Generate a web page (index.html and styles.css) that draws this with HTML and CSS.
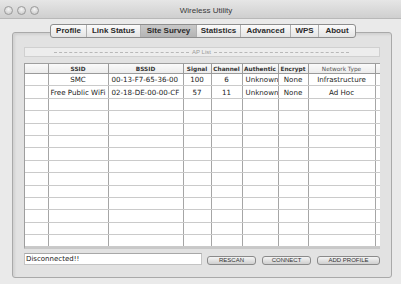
FILE: index.html
```html
<!DOCTYPE html>
<html lang="en">
<head>
    <meta charset="UTF-8">
    <title>Wireless Utility</title>
    <link rel="stylesheet" href="styles.css">
</head>
<body>

<div class="window">
    <div class="titlebar">
        <div class="lights">
            <span class="light"></span>
            <span class="light"></span>
            <span class="light"></span>
        </div>
        <div class="title">Wireless Utility</div>
    </div>

    <div class="content">
        <div class="tabs">
            <div class="tab w-profile">Profile</div>
            <div class="tab w-link">Link Status</div>
            <div class="tab w-survey active">Site Survey</div>
            <div class="tab w-stats">Statistics</div>
            <div class="tab w-adv">Advanced</div>
            <div class="tab w-wps">WPS</div>
            <div class="tab w-about">About</div>
        </div>

        <div class="panel">
            <div class="aplist">
                <span class="dash"></span>
                <span class="aplabel">AP List</span>
                <span class="dash"></span>
            </div>

            <div class="grid">
                <table>
                    <colgroup>
                        <col class="c0"><col class="c1"><col class="c2"><col class="c3"><col class="c4">
                        <col class="c5"><col class="c6"><col class="c7"><col class="c8">
                    </colgroup>
                    <thead>
                        <tr>
                            <th></th>
                            <th>SSID</th>
                            <th>BSSID</th>
                            <th>Signal</th>
                            <th>Channel</th>
                            <th>Authentic</th>
                            <th>Encrypt</th>
                            <th class="light-head">Network Type</th>
                            <th></th>
                        </tr>
                    </thead>
                    <tbody>
                        <tr>
                            <td></td><td>SMC</td><td class="left">00-13-F7-65-36-00</td><td>100</td><td>6</td>
                            <td class="left">Unknown</td><td>None</td><td>Infrastructure</td><td></td>
                        </tr>
                        <tr>
                            <td></td><td>Free Public WiFi</td><td class="left">02-18-DE-00-00-CF</td><td>57</td><td>11</td>
                            <td class="left">Unknown</td><td>None</td><td>Ad Hoc</td><td></td>
                        </tr>
                        <tr><td></td><td></td><td></td><td></td><td></td><td></td><td></td><td></td><td></td></tr>
                        <tr><td></td><td></td><td></td><td></td><td></td><td></td><td></td><td></td><td></td></tr>
                        <tr><td></td><td></td><td></td><td></td><td></td><td></td><td></td><td></td><td></td></tr>
                        <tr><td></td><td></td><td></td><td></td><td></td><td></td><td></td><td></td><td></td></tr>
                        <tr><td></td><td></td><td></td><td></td><td></td><td></td><td></td><td></td><td></td></tr>
                        <tr><td></td><td></td><td></td><td></td><td></td><td></td><td></td><td></td><td></td></tr>
                        <tr><td></td><td></td><td></td><td></td><td></td><td></td><td></td><td></td><td></td></tr>
                        <tr><td></td><td></td><td></td><td></td><td></td><td></td><td></td><td></td><td></td></tr>
                        <tr><td></td><td></td><td></td><td></td><td></td><td></td><td></td><td></td><td></td></tr>
                        <tr><td></td><td></td><td></td><td></td><td></td><td></td><td></td><td></td><td></td></tr>
                        <tr><td></td><td></td><td></td><td></td><td></td><td></td><td></td><td></td><td></td></tr>
                        <tr><td></td><td></td><td></td><td></td><td></td><td></td><td></td><td></td><td></td></tr>
                        <tr><td></td><td></td><td></td><td></td><td></td><td></td><td></td><td></td><td></td></tr>
                    </tbody>
                </table>
            </div>

            <div class="bottom">
                <div class="status">Disconnected!!</div>
                <button class="btn b-rescan">RESCAN</button>
                <button class="btn b-connect">CONNECT</button>
                <button class="btn b-add">ADD PROFILE</button>
            </div>
        </div>
    </div>
</div>

</body>
</html>
```

FILE: styles.css
```css
body {
    margin: 0;
    font-family: "Liberation Sans", Arial, sans-serif;
    background: #ebebeb;
    color: #222;
}
.window {
    width: 401px;
    height: 284px;
    overflow: hidden;
    background: #eaeaea;
}
.titlebar {
    height: 19px;
    display: flex;
    align-items: center;
    background: linear-gradient(#e6e6e6, #cfcfcf);
    border-bottom: 1px solid #b8b8b8;
    box-sizing: border-box;
}
.lights {
    display: flex;
    gap: 4px;
    padding-left: 4px;
    padding-top: 2px;
}
.light {
    width: 7px;
    height: 7px;
    border-radius: 50%;
    border: 1px solid #9a9a9a;
    background: radial-gradient(circle at 50% 35%, #f4f4f4, #c4c4c4);
}
.title {
    flex: 1;
    text-align: center;
    font-size: 8px;
    color: #3a3a3a;
    padding-right: 28px;
    padding-top: 2px;
}
.content {
    padding: 5px 9px 0 12px;
}
.tabs {
    display: flex;
    height: 12px;
    margin-left: 38px;
    width: max-content;
    border: 1px solid #8e8e8e;
    border-radius: 3px;
    background: linear-gradient(#fbfbfb, #e4e4e4);
    position: relative;
    z-index: 1;
    margin-bottom: -6px;
    overflow: hidden;
}
.tab {
    font-size: 8px;
    font-weight: bold;
    color: #2a2a2a;
    text-align: center;
    line-height: 12px;
    border-right: 1px solid #b0b0b0;
    box-sizing: border-box;
}
.tab:last-child { border-right: none; }
.tab.active {
    background: linear-gradient(#c9c9c9, #b4b4b4);
}
.w-profile { width: 36px; }
.w-link { width: 54px; }
.w-survey { width: 56px; }
.w-stats { width: 44px; }
.w-adv { width: 50px; }
.w-wps { width: 28px; }
.w-about { width: 36px; }

.panel {
    width: 380px;
    height: 246px;
    box-sizing: border-box;
    border: 1px solid #a9a9a9;
    border-radius: 3px;
    background: #e2e2e2;
    box-shadow: inset 2px 2px 2px #d2d2d2;
    padding: 14px 11px 0 11px;
}
.aplist {
    height: 10px;
    box-sizing: border-box;
    border: 1px solid #d0d0d0;
    background: #ededed;
    display: flex;
    align-items: center;
    padding: 0 30px 0 29px;
    gap: 3px;
}
.dash {
    flex: 1;
    border-top: 1px dashed #b8b8b8;
}
.aplabel {
    font-size: 6px;
    color: #9a9a9a;
}
.grid {
    margin-top: 6px;
    height: 186px;
    overflow: hidden;
    background: #fff;
    border: 1px solid #9e9e9e;
    border-right: none;
    border-bottom: 2px solid #c8c8c8;
    box-sizing: border-box;
}
table {
    width: 356px;
    table-layout: fixed;
    border-collapse: collapse;
    font-family: "DejaVu Sans", sans-serif;
}
.c0 { width: 23px; }
.c1 { width: 60px; }
.c2 { width: 75px; }
.c3 { width: 28px; }
.c4 { width: 31px; }
.c5 { width: 36px; }
.c6 { width: 30px; }
.c7 { width: 67px; }
.c8 { width: 6px; }
th {
    height: 9px;
    font-size: 5.8px;
    font-weight: bold;
    color: #333;
    padding: 0;
    border-right: 1px solid #9a9a9a;
    border-bottom: 1px solid #9a9a9a;
    background: linear-gradient(#fafafa, #ececec);
    white-space: nowrap;
    overflow: hidden;
}
th.light-head {
    font-weight: normal;
    color: #555;
}
td {
    height: 11.4px;
    padding: 0;
    font-size: 7.1px;
    text-align: center;
    color: #222;
    border-right: 1px solid #a6a6a6;
    border-bottom: 1px solid #cacaca;
    white-space: nowrap;
    overflow: hidden;
}
td.left {
    text-align: left;
    padding-left: 3px;
}
.bottom {
    display: flex;
    align-items: flex-start;
    margin-top: 4px;
}
.status {
    width: 178px;
    height: 12px;
    box-sizing: border-box;
    background: #fff;
    border: 1px solid #c4c4c4;
    border-top-color: #a8a8a8;
    font-family: "DejaVu Sans", sans-serif;
    font-size: 7px;
    line-height: 11px;
    padding-left: 1px;
    color: #222;
}
.btn {
    height: 9px;
    margin-top: 3px;
    padding: 0;
    font-family: "Liberation Sans", Arial, sans-serif;
    font-size: 6px;
    line-height: 7px;
    color: #333;
    border: 1px solid #8a8a8a;
    border-radius: 3px;
    background: linear-gradient(#f4f4f4, #cfcfcf);
}
.b-rescan { width: 49px; margin-left: 5px; }
.b-connect { width: 49px; margin-left: 6px; }
.b-add { width: 63px; margin-left: 6px; }
```
